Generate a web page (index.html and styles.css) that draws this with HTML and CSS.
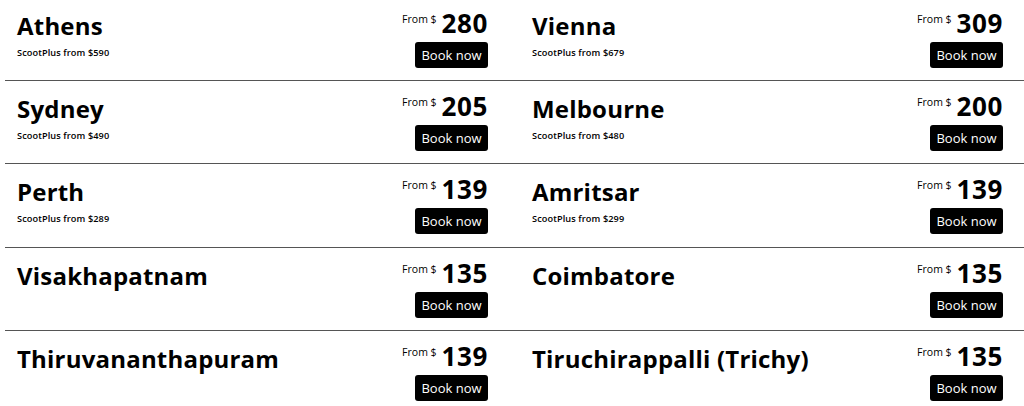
FILE: index.html
```html
<!DOCTYPE html>
<html lang="en">
<head>
<meta charset="utf-8">
<title>Fares</title>
<link rel="stylesheet" href="styles.css">
</head>
<body>
<div class="list">
  <div class="row">
    <div class="card">
      <div class="info"><h2 class="name">Athens</h2><p class="sub">ScootPlus from $590</p></div>
      <div class="buy"><div class="price"><span class="from">From $</span><span class="amt">280</span></div><button class="btn">Book now</button></div>
    </div>
    <div class="card">
      <div class="info"><h2 class="name">Vienna</h2><p class="sub">ScootPlus from $679</p></div>
      <div class="buy"><div class="price"><span class="from">From $</span><span class="amt">309</span></div><button class="btn">Book now</button></div>
    </div>
  </div>
  <div class="row">
    <div class="card">
      <div class="info"><h2 class="name">Sydney</h2><p class="sub">ScootPlus from $490</p></div>
      <div class="buy"><div class="price"><span class="from">From $</span><span class="amt">205</span></div><button class="btn">Book now</button></div>
    </div>
    <div class="card">
      <div class="info"><h2 class="name">Melbourne</h2><p class="sub">ScootPlus from $480</p></div>
      <div class="buy"><div class="price"><span class="from">From $</span><span class="amt">200</span></div><button class="btn">Book now</button></div>
    </div>
  </div>
  <div class="row">
    <div class="card">
      <div class="info"><h2 class="name">Perth</h2><p class="sub">ScootPlus from $289</p></div>
      <div class="buy"><div class="price"><span class="from">From $</span><span class="amt">139</span></div><button class="btn">Book now</button></div>
    </div>
    <div class="card">
      <div class="info"><h2 class="name">Amritsar</h2><p class="sub">ScootPlus from $299</p></div>
      <div class="buy"><div class="price"><span class="from">From $</span><span class="amt">139</span></div><button class="btn">Book now</button></div>
    </div>
  </div>
  <div class="row">
    <div class="card">
      <div class="info"><h2 class="name">Visakhapatnam</h2></div>
      <div class="buy"><div class="price"><span class="from">From $</span><span class="amt">135</span></div><button class="btn">Book now</button></div>
    </div>
    <div class="card">
      <div class="info"><h2 class="name">Coimbatore</h2></div>
      <div class="buy"><div class="price"><span class="from">From $</span><span class="amt">135</span></div><button class="btn">Book now</button></div>
    </div>
  </div>
  <div class="row last">
    <div class="card">
      <div class="info"><h2 class="name">Thiruvananthapuram</h2></div>
      <div class="buy"><div class="price"><span class="from">From $</span><span class="amt">139</span></div><button class="btn">Book now</button></div>
    </div>
    <div class="card">
      <div class="info"><h2 class="name">Tiruchirappalli (Trichy)</h2></div>
      <div class="buy"><div class="price"><span class="from">From $</span><span class="amt">135</span></div><button class="btn">Book now</button></div>
    </div>
  </div>
</div>
</body>
</html>
```
FILE: styles.css
```css
* { box-sizing: border-box; }
html, body { margin: 0; padding: 0; background: #fff; overflow: hidden; }
body {
  font-family: "Open Sans", "Noto Sans", sans-serif;
  color: #000;
}
.list {
  margin-left: 5px;
  margin-top: -2.33px;
}
.row {
  display: grid;
  grid-template-columns: 471px 471px;
  column-gap: 44px;
  padding: 0 12px;
  height: 83.33px;
  border-bottom: 1px solid #555;
}
.row.last { border-bottom: none; }
.card {
  display: flex;
  justify-content: space-between;
  align-items: flex-start;
}
.info { padding-top: 13px; }
.name {
  margin: 0;
  font-size: 24px;
  line-height: 30px;
  font-weight: 700;
  letter-spacing: 0.2px;
}
.sub {
  margin: 6px 0 0;
  font-size: 9.2px;
  line-height: 12px;
  font-weight: 600;
  letter-spacing: 0.1px;
}
.buy {
  display: flex;
  flex-direction: column;
  align-items: flex-end;
  padding-top: 11px;
}
.price {
  display: flex;
  align-items: flex-start;
  gap: 5px;
}
.from {
  font-size: 10.5px;
  line-height: 14px;
  padding-top: 3px;
  font-weight: 400;
}
.amt {
  font-size: 26px;
  line-height: 29px;
  font-weight: 700;
  letter-spacing: 0.6px;
}
.btn {
  margin-top: 4px;
  width: 73px;
  height: 26px;
  border: none;
  border-radius: 3px;
  background: #000;
  color: #fff;
  font-family: "Open Sans", "Noto Sans", sans-serif;
  font-size: 13px;
  padding: 0;
}
```
